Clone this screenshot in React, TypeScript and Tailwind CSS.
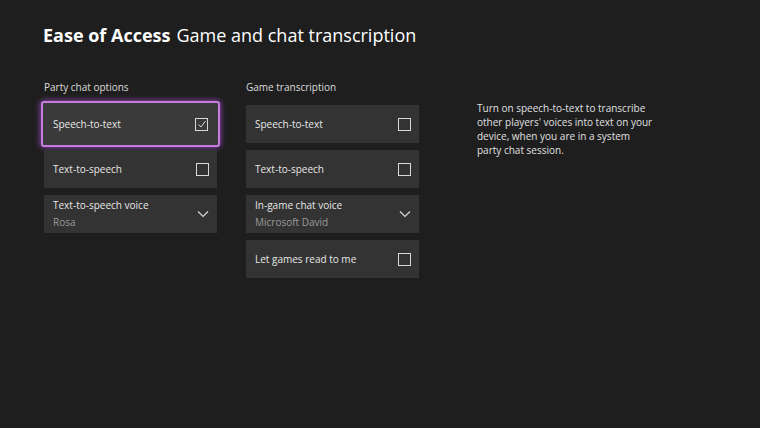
import React from 'react';

const font = { fontFamily: '"Open Sans", "Noto Sans", sans-serif' };

function Box({ checked }: { checked?: boolean }) {
  return (
    <div className="w-[13px] h-[13px] border border-[#d8d8d8] flex items-center justify-center">
      {checked && (
        <svg width="10" height="10" viewBox="0 0 10 10" fill="none" stroke="#d8d8d8" strokeWidth="1">
          <path d="M1.5 5.5 L4 8 L8.5 2" />
        </svg>
      )}
    </div>
  );
}

function Chevron() {
  return (
    <svg width="12" height="8" viewBox="0 0 12 8" fill="none" stroke="#d8d8d8" strokeWidth="1.2">
      <path d="M1 1.5 L6 6.5 L11 1.5" />
    </svg>
  );
}

function Tile({ label, checked, sub, focused }: { label: string; checked?: boolean; sub?: string; focused?: boolean }) {
  if (focused) {
    return (
      <div className="-mx-[3px] -my-[4px] h-[46px] rounded-[3px] border-2 border-[#c77dde] shadow-[0_0_6px_#a24fcf] bg-[#3a3a3a] flex items-center justify-between pl-[10px] pr-[10px]">
        <span className="text-[10px] text-[#e8e8e8]">{label}</span>
        <Box checked={checked} />
      </div>
    );
  }
  return (
    <div className="h-[38px] bg-[#333333] flex items-center justify-between pl-[9px] pr-[8px]">
      {sub ? (
        <div className="flex flex-col leading-[17px]">
          <span className="text-[10px] text-[#e8e8e8]">{label}</span>
          <span className="text-[10px] text-[#9a9a9a]">{sub}</span>
        </div>
      ) : (
        <span className="text-[10px] text-[#e8e8e8]">{label}</span>
      )}
      {sub ? <Chevron /> : <Box checked={checked} />}
    </div>
  );
}

export default function App() {
  return (
    <div className="w-[760px] h-[428px] bg-[#1e1e1e] text-white overflow-hidden" style={font}>
      <div className="pl-[43px] pt-[22px] flex items-baseline gap-[6px]">
        <span className="text-[18px] font-bold">Ease of Access</span>
        <span className="text-[18px]">Game and chat transcription</span>
      </div>
      <div className="flex pl-[44px] pt-[31px]">
        <div className="w-[173px]">
          <div className="text-[10px] text-[#dcdcdc] h-[17px]">Party chat options</div>
          <div className="mt-[8px] flex flex-col gap-[7px]">
            <Tile label="Speech-to-text" checked focused />
            <Tile label="Text-to-speech" />
            <Tile label="Text-to-speech voice" sub="Rosa" />
          </div>
        </div>
        <div className="w-[173px] ml-[29px]">
          <div className="text-[10px] text-[#dcdcdc] h-[17px]">Game transcription</div>
          <div className="mt-[8px] flex flex-col gap-[7px]">
            <Tile label="Speech-to-text" />
            <Tile label="Text-to-speech" />
            <Tile label="In-game chat voice" sub="Microsoft David" />
            <Tile label="Let games read to me" />
          </div>
        </div>
        <div className="ml-[58px] mt-[21px] w-[176px] text-[10px] leading-[14px] text-[#e0e0e0]">
          Turn on speech-to-text to transcribe other players' voices into text on your device, when you are in a system party chat session.
        </div>
      </div>
    </div>
  );
}
